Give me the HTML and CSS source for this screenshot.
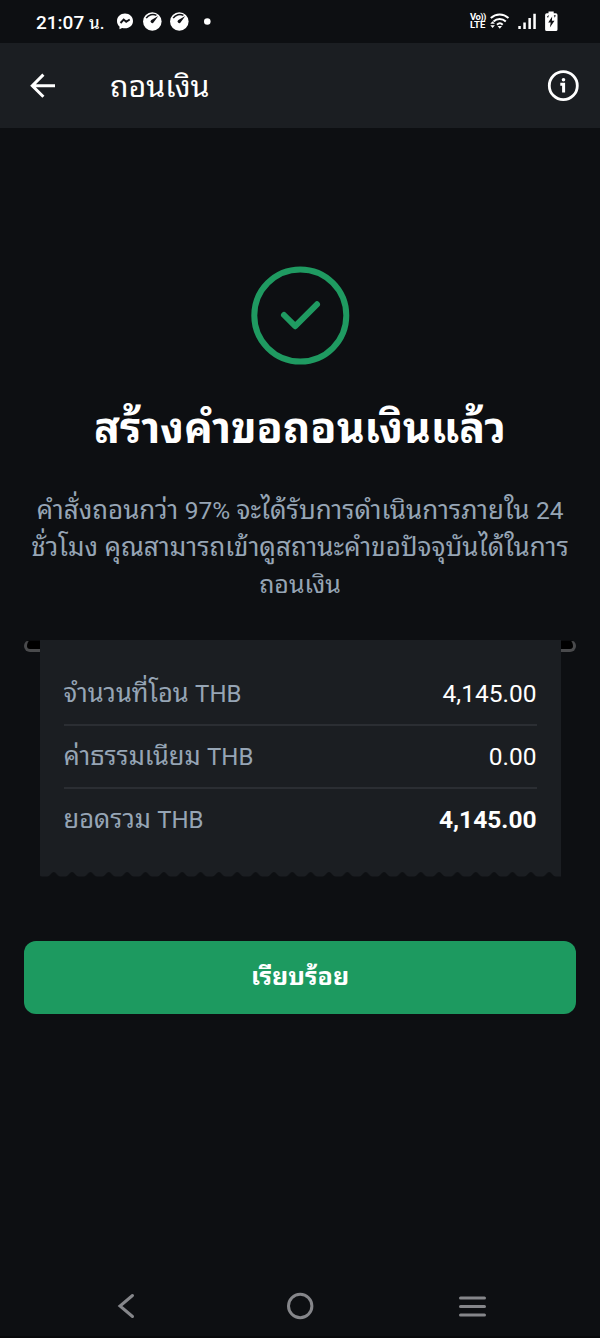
FILE: index.html
```
<!DOCTYPE html>
<html lang="th">
<head>
<meta charset="utf-8">
<title>ถอนเงิน</title>
<link rel="stylesheet" href="styles.css">
</head>
<body>
<div class="status">
  <span class="clock">21:07 <span class="clock-unit">น.</span></span>
  <svg class="status-left" width="100" height="24" viewBox="115 9 100 24">
    <path d="M125 13.500c-4.600 0-8 3.200-8 7.500 0 2.300.9 4.200 2.500 5.500v2.700l2.600-1.300c.9.300 1.900.4 2.900.4 4.600 0 8-3.100 8-7.300s-3.400-7.500-8-7.500z" fill="#fff"/>
    <path d="M120.500 23l3.200-3.500 2.500 2.200 3.500-2.200" fill="none" stroke="#111216" stroke-width="1.900"/>
    <g id="gauge">
      <circle cx="152.300" cy="21.500" r="9.300" fill="#fff"/>
      <path d="M146.200 18.200c2.200-3.600 6.800-4.600 10.200-2.900" fill="none" stroke="#111216" stroke-width="1.500"/>
      <path d="M158.300 16l-4.600 6.300a1.700 1.700 0 1 1-2.300-2.400z" fill="#111216"/>
    </g>
    <use href="#gauge" x="27"/>
    <circle cx="207.300" cy="21.500" r="3.300" fill="#fff"/>
  </svg>
  <div class="volte"><span class="volte-top">Vo))</span><span>LTE</span></div>
  <svg class="status-right" width="72" height="24" viewBox="488 9 72 24">
    <g fill="none" stroke="#fff" stroke-width="2">
      <path d="M490.800 18c5.200-4.700 12.500-4.700 17.700 0"/>
      <path d="M493.500 21.500c3.500-3.400 8.800-3.400 12.300 0"/>
      <path d="M497 24.700c1.700-1.600 4.100-1.600 5.700 0"/>
    </g>
    <path d="M497.600 26h4.400l-2.200 2.700zM490.300 23.700h4.600l-2.300-2.500zM490.300 25.200h4.600l-2.300 2.700z" fill="#fff"/>
    <path d="M518.300 26h2.500v3h-2.500zM523.300 22.500h2.500V29h-2.500zM528.400 18h2.500v11h-2.500zM533.300 13.700h2.500V29h-2.500z" fill="#fff"/>
    <path d="M548.500 11.500h5.200v1.800h2.200q1.600 0 1.600 1.600v14.500q0 1.600-1.600 1.600h-9.200q-1.600 0-1.600-1.600V14.900q0-1.600 1.600-1.600h1.800z" fill="#fff"/>
    <path d="M547 16.500l2-1.500-1 3zM555.800 15.300l-2 0 1 2.500zM552.200 16.500l-4 6h2.500l-.8 5 4.600-6.700h-2.600z" fill="#111216"/>
  </svg>
</div>
<header class="header">
  <svg class="back" width="28" height="28" viewBox="29 72 28 28"><path d="M55 85.700H32.800M43.400 74.600L32.300 85.700l11.100 11.100" fill="none" stroke="#fff" stroke-width="3"/></svg>
  <h1 class="header-title">ถอนเงิน</h1>
  <svg class="info" width="32" height="32" viewBox="547 70 32 32"><circle cx="563.300" cy="85.700" r="14" fill="none" stroke="#fff" stroke-width="2.800"/><circle cx="563.500" cy="79.800" r="1.800" fill="#fff"/><path d="M560.300 84.200h3.300v8.400" fill="none" stroke="#fff" stroke-width="3"/></svg>
</header>
<main class="main">
  <svg class="success" width="100" height="100" viewBox="250 265 100 100"><circle cx="300.300" cy="315.500" r="46" fill="none" stroke="#1f9a61" stroke-width="6"/><path d="M284 315l11.200 11.200L317 304.300" fill="none" stroke="#1f9a61" stroke-width="6" stroke-linecap="round" stroke-linejoin="round"/></svg>
  <h2 class="title">สร้างคำขอถอนเงินแล้ว</h2>
  <p class="desc"><span class="line">คำสั่งถอนกว่า <span class="latin">97%</span> จะได้รับการดำเนินการภายใน <span class="latin">24</span></span><span class="line">ชั่วโมง คุณสามารถเข้าดูสถานะคำขอปัจจุบันได้ในการ</span><span class="line last">ถอนเงิน</span></p>
  <div class="slot">
    <section class="receipt">
      <div class="row"><span class="label">จำนวนที่โอน <span class="latin">THB</span></span><span class="value">4,145.00</span></div>
      <div class="row"><span class="label">ค่าธรรมเนียม <span class="latin">THB</span></span><span class="value">0.00</span></div>
      <div class="row"><span class="label">ยอดรวม <span class="latin">THB</span></span><span class="value total">4,145.00</span></div>
    </section>
    <svg class="edge" width="521" height="6"><defs><pattern id="teeth" x="-4.600" y="0" width="18.350" height="6" patternUnits="userSpaceOnUse"><path d="M0 0H18.350C15.500 0 15 4.500 11.500 4.500H6.800C3.300 4.500 2.800 0 0 0z" fill="#1b1e22"/></pattern></defs><rect width="521" height="6" fill="url(#teeth)"/></svg>
  </div>
  <button class="done">เรียบร้อย</button>
</main>
<nav class="nav">
  <svg width="600" height="60" viewBox="0 1276 600 60" fill="none" stroke="#85868a" stroke-width="3" stroke-linecap="round"><path d="M132.500 1295.500L120 1306l12.500 10.500"/><circle cx="300.200" cy="1306" r="11.700"/><path d="M460.500 1298h24M460.500 1306.500h24M460.500 1315h24"/></svg>
</nav>
</body>
</html>
```
FILE: styles.css
```
* { box-sizing: border-box; }
body {
  margin: 0;
  width: 600px;
  height: 1338px;
  display: flex;
  flex-direction: column;
  overflow: hidden;
  background: #0d0f12;
  color: #fff;
  font-family: Roboto, "Noto Sans Thai Looped", "Noto Looped Thai", "Droid Sans Thai", Loma, Garuda, Waree, "Noto Sans Thai", "Noto Sans", sans-serif;
}
svg { display: block; flex: none; }
.status {
  height: 43px;
  flex: none;
  display: flex;
  align-items: center;
  padding: 0 40px 1px 36px;
}
.clock { width: 79px; white-space: nowrap; font-size: 19px; font-weight: 500; }
.clock-unit { font-size: 17px; }
.volte {
  margin-left: auto;
  width: 18px;
  display: flex;
  flex-direction: column;
  font-size: 9.500px;
  line-height: 8.500px;
  font-weight: 700;
}
.volte-top { letter-spacing: -0.6px; }
.header {
  height: 85px;
  flex: none;
  display: flex;
  align-items: center;
  padding: 0 21px 0 29px;
  background: #1b1e22;
}
.header-title { margin: 3px auto 0 53px; font-size: 30.500px; font-weight: 400; line-height: 40px; white-space: nowrap; }
.main { display: flex; flex-direction: column; align-items: center; padding-top: 137px; }
.title { margin: 32px 0 0; height: 66px; line-height: 62px; font-size: 42.800px; font-weight: 700; white-space: nowrap; }
.desc {
  margin: 29px 0 0;
  display: flex;
  flex-direction: column;
  align-items: center;
  font-size: 26px;
  line-height: 37px;
  color: #96a5b5;
  white-space: nowrap;
}
.line { height: 37px; }
.last { font-size: 25px; }
.latin { font-size: 24.500px; }
.slot {
  margin-top: 37px;
  width: 552px;
  height: 237px;
  padding: 0 15.500px;
  position: relative;
}
.slot::before {
  content: "";
  box-sizing: border-box;
  position: absolute;
  inset: 0 0 auto;
  height: 12px;
  border: 3px solid #494a4c;
  border-top: 1px solid #0a0b0d;
  border-radius: 6px;
  background: #000;
}
.receipt { position: relative; height: 232px; background: #1b1e22; padding: 23px 24px 0; }
.row { height: 63px; display: flex; justify-content: space-between; align-items: center; border-bottom: 2px solid #2b2e33; white-space: nowrap; font-size: 25.500px; line-height: 36px; }
.row:last-child { border-color: transparent; }
.label { color: #96a5b5; }
.label .latin { font-size: 24px; }
.value { font-size: 24.500px; }
.total { font-weight: 700; }
.done {
  margin-top: 64px;
  width: 552px;
  height: 73px;
  padding: 0 0 7px;
  border: 0;
  border-radius: 12px;
  background: #1d9a60;
  color: #fff;
  font: inherit;
  font-size: 25px;
  font-weight: 700;
}
.nav { margin-top: auto; height: 62px; border-bottom: 2px solid #08090b; }
```
